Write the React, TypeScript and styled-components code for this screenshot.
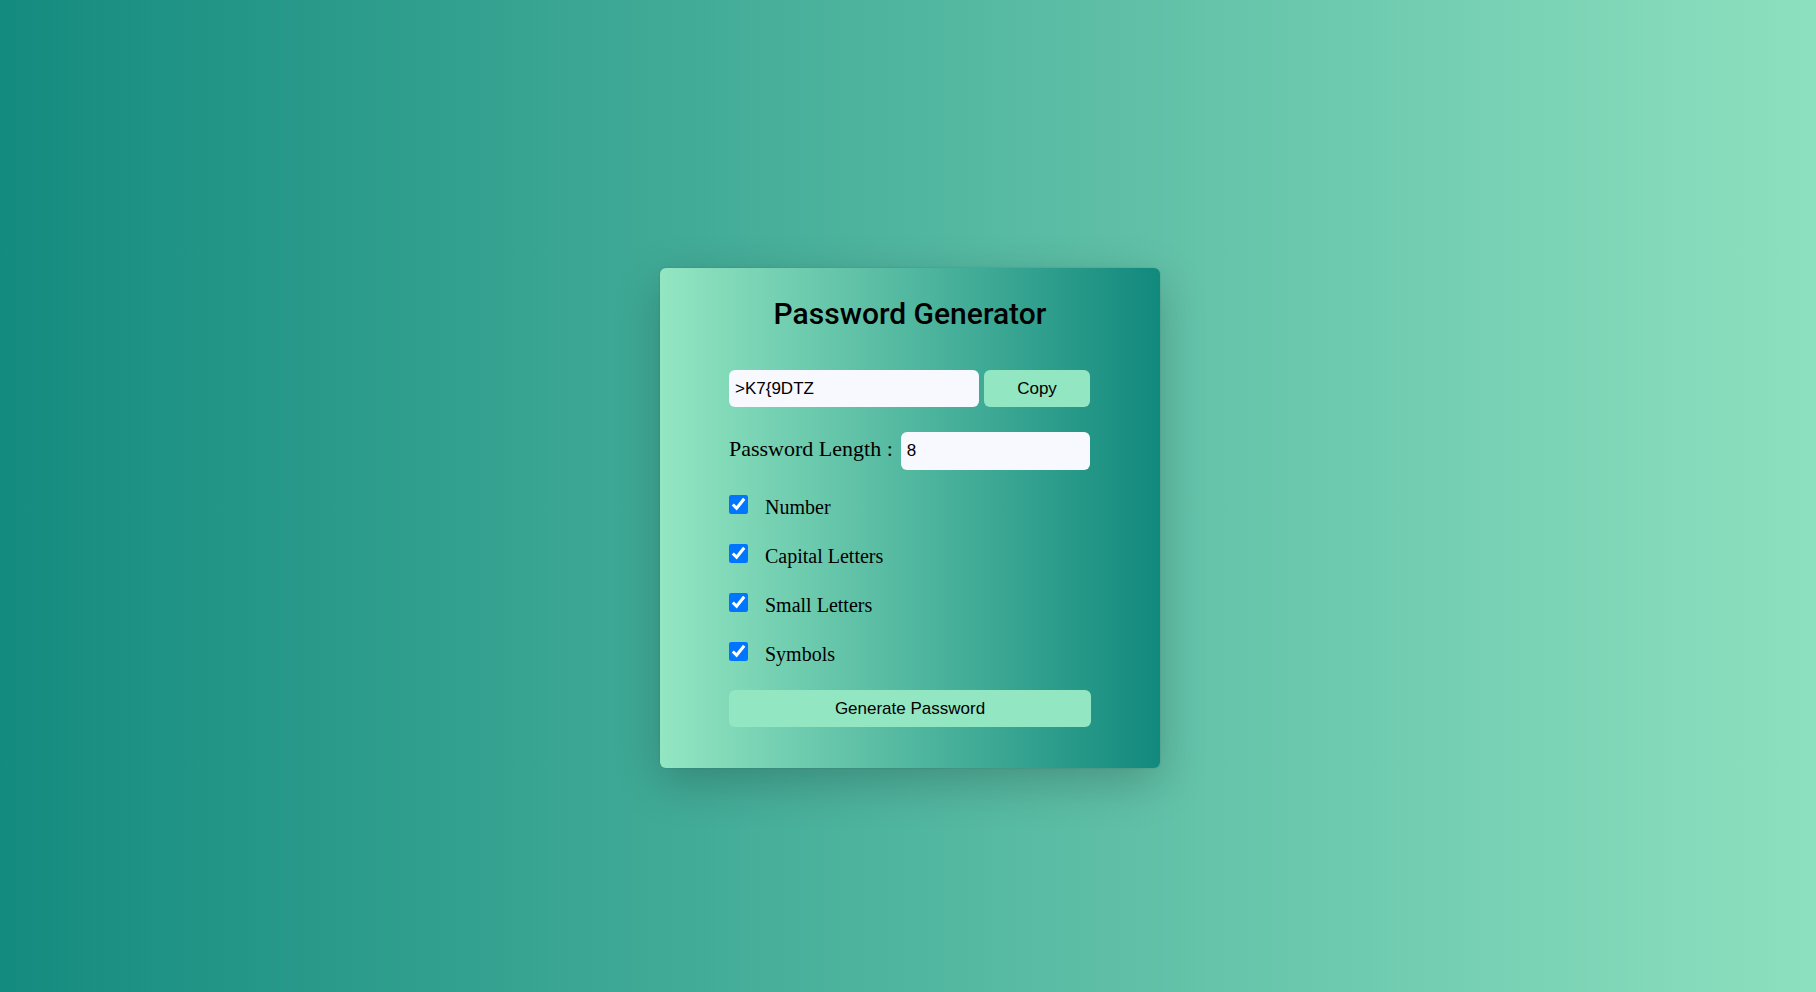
import React, { useState } from "react";
import styled, { createGlobalStyle } from "styled-components";

const GlobalStyle = createGlobalStyle`
  *, *::before, *::after { box-sizing: border-box; }
  body { margin: 0; }
`;

const Page = styled.main`
  min-height: 100vh;
  display: flex;
  align-items: center;
  justify-content: center;
  padding: 44px 0 0 4px;
  background: linear-gradient(to right, #148b7f, #8de0bf);
  font-family: "Liberation Serif", "Times New Roman", serif;
  color: #000;
`;

const Card = styled.form`
  width: 500px;
  max-width: 100%;
  padding: 25px 69px 41px;
  border-radius: 6px;
  background: linear-gradient(to left, #11897d, #93e6c2);
  box-shadow: 0 14px 46px rgba(0, 0, 0, 0.22), 0 0 2px rgba(0, 0, 0, 0.15);
`;

const Title = styled.h1`
  margin: 0 0 35px;
  font: 500 30px/42px Roboto, sans-serif;
  text-align: center;
  white-space: nowrap;
`;

const Row = styled.div<{ $gap: number }>`
  display: flex;
  gap: ${(p) => p.$gap}px;
  margin-bottom: 25px;
  padding-right: 1px;
`;

const Field = styled.input`
  flex: 1;
  min-width: 0;
  height: 37px;
  padding: 0 6px;
  border: 0;
  border-radius: 6px;
  outline: 0;
  background: #f8f8ff;
  color: #000;
  font: 17px "Liberation Sans", Arial, sans-serif;
  appearance: textfield;

  &[type="number"] { height: 38px; }
  &::-webkit-inner-spin-button { appearance: none; }
`;

const Button = styled.button<{ $wide?: boolean }>`
  display: block;
  width: ${(p) => (p.$wide ? "100%" : "106px")};
  height: 37px;
  padding: 0;
  border: 0;
  border-radius: 6px;
  background: #93e6c2;
  color: #000;
  font: 17px "Liberation Sans", Arial, sans-serif;
  cursor: pointer;
`;

const LengthLabel = styled.label`
  font-size: 22px;
  line-height: 34px;
  white-space: nowrap;
`;

const Options = styled.div`
  display: grid;
  gap: 25px;
  margin-bottom: 24px;
`;

const Option = styled.label`
  display: flex;
  align-items: flex-start;
  gap: 17px;
  font-size: 20px;
  line-height: 24px;
`;

const Check = styled.input`
  width: 19px;
  height: 19px;
  margin: 0;
`;

const sets: Record<string, string> = {
  Number: "0123456789",
  "Capital Letters": "ABCDEFGHIJKLMNOPQRSTUVWXYZ",
  "Small Letters": "abcdefghijklmnopqrstuvwxyz",
  Symbols: "!@#$%^&*(){}[]<>?/",
};

export default function App() {
  const [password, setPassword] = useState(">K7{9DTZ");
  const [length, setLength] = useState("8");
  const [enabled, setEnabled] = useState<string[]>(Object.keys(sets));

  const toggle = (name: string) =>
    setEnabled((list) => (list.includes(name) ? list.filter((n) => n !== name) : [...list, name]));

  const generate = (e: React.FormEvent) => {
    e.preventDefault();
    const pool = enabled.map((n) => sets[n]).join("");
    if (!pool) return;
    setPassword(
      Array.from({ length: Number(length) }, () => pool[Math.floor(Math.random() * pool.length)]).join("")
    );
  };

  return (
    <>
      <GlobalStyle />
      <Page>
        <Card onSubmit={generate}>
          <Title>Password Generator</Title>
          <Row $gap={5}>
            <Field type="text" aria-label="Password" readOnly value={password} />
            <Button type="button" onClick={() => navigator.clipboard?.writeText(password)}>
              Copy
            </Button>
          </Row>
          <Row $gap={8}>
            <LengthLabel htmlFor="length">Password Length :</LengthLabel>
            <Field
              id="length"
              type="number"
              min={1}
              max={30}
              value={length}
              onChange={(e) => setLength(e.target.value)}
            />
          </Row>
          <Options>
            {Object.keys(sets).map((name) => (
              <Option key={name}>
                <Check type="checkbox" checked={enabled.includes(name)} onChange={() => toggle(name)} />
                {name}
              </Option>
            ))}
          </Options>
          <Button type="submit" $wide>
            Generate Password
          </Button>
        </Card>
      </Page>
    </>
  );
}
